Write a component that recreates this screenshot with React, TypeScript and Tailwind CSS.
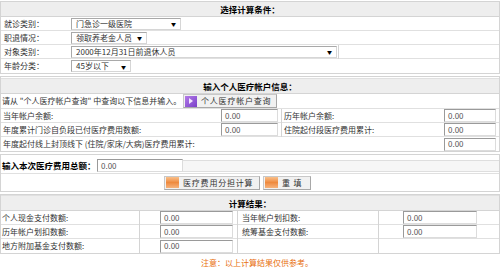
import React from "react";

const Select = ({ text, className }: { text: string; className: string }) => (
  <div
    className={`flex items-center justify-between h-[12px] bg-white border border-[#a9a9a9] border-r-[#d6d6d6] border-b-[#d6d6d6] pl-[4px] pr-[4px] whitespace-nowrap ${className}`}
  >
    <span className="leading-none">{text}</span>
    <span className="text-[5px] leading-none text-black">▼</span>
  </div>
);

const Field = ({ className, value = "0.00" }: { className: string; value?: string }) => (
  <div
    className={`flex items-center h-[13px] bg-white border border-[#9a9a9a] border-r-[#dcdcdc] border-b-[#dcdcdc] pl-[3px] text-[#555] ${className}`}
  >
    <span className="leading-none">{value}</span>
  </div>
);

const Header = ({ title }: { title: string }) => (
  <div className="flex items-center justify-center h-[15px] bg-[#eeeeee] border-b border-[#d4d4d4] font-bold text-black text-[8.5px] whitespace-nowrap">
    {title}
  </div>
);

const Button = ({ label, icon, className }: { label: string; icon: "purple" | "orange"; className: string }) => (
  <div
    className={`flex items-center gap-[4px] h-[14px] bg-[#f1f1f1] border border-[#c8c8c8] border-r-[#a8a8a8] border-b-[#a8a8a8] pr-[3px] whitespace-nowrap ${className}`}
  >
    {icon === "purple" ? (
      <div className="flex shrink-0 items-center justify-center w-[12px] h-[11px] bg-gradient-to-br from-[#b47ae8] to-[#7a3fc8] ml-[1px]">
        <div className="w-0 h-0 border-y-[3px] border-y-transparent border-l-[4px] border-l-[#f3e6ff]" />
      </div>
    ) : (
      <div className="shrink-0 w-[13px] h-[11px] bg-gradient-to-b from-[#f9c089] via-[#ee8a3e] to-[#f6b27a] ml-[1px]" />
    )}
    <span className="leading-none tracking-[0.8px]">{label}</span>
  </div>
);

const Row = ({ children, className = "" }: { children: React.ReactNode; className?: string }) => (
  <div className={`flex items-center h-[14px] border-b border-[#e0e0e0] whitespace-nowrap ${className}`}>{children}</div>
);

export default function App() {
  return (
    <div className="w-[500px] h-[273px] overflow-hidden bg-white text-[8px] text-[#333] font-['Noto_Sans_CJK_SC','Noto_Sans',sans-serif] pt-[1px]">
      {/* 选择计算条件 */}
      <div className="border border-[#d4d4d4]">
        <Header title="选择计算条件：" />
        <Row>
          <div className="w-[70px] pl-[3px]">就诊类别：</div>
          <Select text="门急诊一级医院" className="w-[110px]" />
        </Row>
        <Row>
          <div className="w-[70px] pl-[3px]">职退情况：</div>
          <Select text="领取养老金人员" className="w-[76px]" />
        </Row>
        <Row>
          <div className="w-[70px] pl-[3px]">对象类别：</div>
          <Select text="2000年12月31日前退休人员" className="w-[266px]" />
          <div className="flex-1 h-[14px] border-l border-[#d4d4d4] ml-[1px]" />
        </Row>
        <Row className="border-b-0">
          <div className="w-[70px] pl-[3px]">年龄分类：</div>
          <Select text="45岁以下" className="w-[60px]" />
        </Row>
      </div>

      {/* 输入个人医疗帐户信息 */}
      <div className="border border-[#d4d4d4] mt-[2px]">
        <div className="h-[2px] border-b border-[#e0e0e0]" />
        <Header title="输入个人医疗帐户信息：" />
        <div className="flex items-center h-[15px] border-b border-[#e0e0e0] whitespace-nowrap">
          <div className="pl-[1px] w-[182px]">请从 "个人医疗帐户查询" 中查询以下信息并输入。</div>
          <Button label="个人医疗帐户查询" icon="purple" className="w-[94px]" />
        </div>
        <Row>
          <div className="w-[220px] pl-[2px]">当年帐户余额:</div>
          <Field className="w-[57px]" />
          <div className="w-[160px] h-[14px] flex items-center border-l border-[#d4d4d4] ml-[3px] pl-[2px]">历年帐户余额:</div>
          <Field className="w-[52px] ml-[3px]" />
        </Row>
        <Row>
          <div className="w-[220px] pl-[2px]">年度累计门诊自负段已付医疗费用数额:</div>
          <Field className="w-[57px]" />
          <div className="w-[160px] h-[14px] flex items-center border-l border-[#d4d4d4] ml-[3px] pl-[2px]">住院起付段医疗费用累计:</div>
          <Field className="w-[52px] ml-[3px]" />
        </Row>
        <Row className="border-b-0">
          <div className="w-[440px] pl-[2px]">年度起付线上封顶线下 (住院/家床/大病)医疗费用累计:</div>
          <Field className="w-[52px] ml-[3px]" />
        </Row>
      </div>

      {/* 输入本次医疗费用总额 */}
      <div className="border border-[#d4d4d4] mt-[2px]">
        <div className="flex items-center h-[19px] border-b border-[#e0e0e0] pt-[3px] whitespace-nowrap">
          <div className="w-[96px] pl-[1px] font-bold text-black text-[8.5px]">输入本次医疗费用总额：</div>
          <Field className="w-[86px]" />
          <div className="flex-1 h-[12px] bg-[#f6f6f6] border-y border-[#dedede]" />
        </div>
        <div className="flex items-center gap-[3px] h-[17px] pl-[163px]">
          <Button label="医疗费用分担计算" icon="orange" className="w-[96px]" />
          <Button label="重 填" icon="orange" className="w-[48px]" />
        </div>
      </div>

      {/* 计算结果 */}
      <div className="border border-[#d4d4d4] mt-[2px]">
        <div className="h-[1px] border-b border-[#e0e0e0]" />
        <Header title="计算结果：" />
        <Row>
          <div className="w-[139px] h-[14px] flex items-center border-r border-[#d4d4d4] pl-[1px]">个人现金支付数额:</div>
          <div className="w-[98px] h-[14px] flex items-center border-r border-[#d4d4d4] pl-[20px]">
            <Field className="w-[73px]" />
          </div>
          <div className="w-[141px] h-[14px] flex items-center border-r border-[#d4d4d4] pl-[4px]">当年帐户划扣数:</div>
          <div className="pl-[24px]">
            <Field className="w-[74px]" />
          </div>
        </Row>
        <Row>
          <div className="w-[139px] h-[14px] flex items-center border-r border-[#d4d4d4] pl-[1px]">历年帐户划扣数额:</div>
          <div className="w-[98px] h-[14px] flex items-center border-r border-[#d4d4d4] pl-[20px]">
            <Field className="w-[73px]" />
          </div>
          <div className="w-[141px] h-[14px] flex items-center border-r border-[#d4d4d4] pl-[4px]">统筹基金支付数额:</div>
          <div className="pl-[24px]">
            <Field className="w-[74px]" />
          </div>
        </Row>
        <Row className="border-b-0">
          <div className="w-[139px] h-[14px] flex items-center border-r border-[#d4d4d4] pl-[1px]">地方附加基金支付数额:</div>
          <div className="w-[98px] h-[14px] flex items-center border-r border-[#d4d4d4] pl-[20px]">
            <Field className="w-[73px]" />
          </div>
          <div className="w-[141px] h-[14px] border-r border-[#d4d4d4]" />
        </Row>
      </div>

      <div className="flex justify-center pt-[3px] pl-[14px] leading-[12px] text-[#e8700f] whitespace-nowrap">
        注意：以上计算结果仅供参考。
      </div>
    </div>
  );
}
